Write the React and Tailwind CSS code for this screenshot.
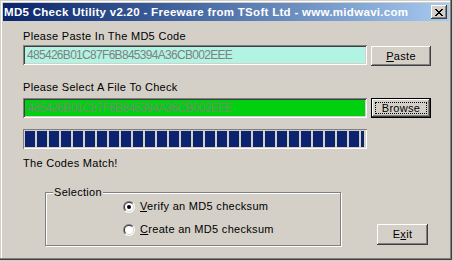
import React from "react";

const raised =
  "shadow-[inset_-1px_-1px_#404040,inset_1px_1px_#ffffff,inset_-2px_-2px_#808080,inset_2px_2px_#d4d0c8]";
const sunken =
  "shadow-[inset_1px_1px_#808080,inset_-1px_-1px_#ffffff,inset_2px_2px_#404040,inset_-2px_-2px_#d4d0c8]";

const Radio = ({ checked }) => (
  <svg width="12" height="12" viewBox="0 0 12 12" className="shrink-0">
    <defs>
      <linearGradient id="rOuter" x1="0" y1="0" x2="1" y2="1">
        <stop offset="0.5" stopColor="#808080" />
        <stop offset="0.5" stopColor="#ffffff" />
      </linearGradient>
      <linearGradient id="rInner" x1="0" y1="0" x2="1" y2="1">
        <stop offset="0.5" stopColor="#404040" />
        <stop offset="0.5" stopColor="#d4d0c8" />
      </linearGradient>
    </defs>
    <circle cx="6" cy="6" r="6" fill="url(#rOuter)" />
    <circle cx="6" cy="6" r="5" fill="url(#rInner)" />
    <circle cx="6" cy="6" r="4" fill="#ffffff" />
    {checked && <circle cx="6" cy="6" r="2" fill="#000000" />}
  </svg>
);

const CloseGlyph = () => (
  <svg width="8" height="7" viewBox="0 0 8 7" shapeRendering="crispEdges">
    <path
      d="M0 0h2v1H0zM6 0h2v1H6zM1 1h2v1H1zM5 1h2v1H5zM2 2h4v1H2zM3 3h2v1H3zM2 4h4v1H2zM1 5h2v1H1zM5 5h2v1H5zM0 6h2v1H0zM6 6h2v1H6z"
      fill="#000"
    />
  </svg>
);

export default function App() {
  const blocks = Array.from({ length: 29 });

  return (
    <div className="w-[453px] h-[261px] bg-[#d4d0c8] font-['Liberation_Sans',Arial,sans-serif] text-[11px] tracking-[0.3px] text-black">
      <div className="w-[452px] h-[260px] p-[3px] shadow-[inset_-1px_-1px_#404040,inset_-2px_-2px_#808080,inset_1px_1px_#d4d0c8,inset_2px_2px_#ffffff]">
        {/* title bar */}
        <div className="h-[18px] flex items-center justify-between bg-gradient-to-r from-[#0a246a] to-[#a6caf0] pl-[1px] pr-[2px]">
          <span className="text-white font-bold text-[11.5px] leading-[18px] tracking-[0.3px] whitespace-nowrap">
            MD5 Check Utility v2.20 - Freeware from TSoft Ltd - www.midwavi.com
          </span>
          <div className={`w-[16px] h-[14px] bg-[#d4d0c8] flex items-center justify-center ${raised}`}>
            <CloseGlyph />
          </div>
        </div>

        {/* content */}
        <div className="pl-[20px]">
          <div className="mt-[9px] leading-[13px]">Please Paste In The MD5 Code</div>
          <div className="mt-[2px] flex items-start gap-[4px]">
            <div className={`w-[344px] h-[20px] bg-[#b2f4e4] pl-[4px] text-[12px] leading-[20px] tracking-[-0.7px] text-[#808080] ${sunken}`}>
              485426B01C87F6B845394A36CB002EEE
            </div>
            <button className={`mt-[1px] w-[60px] h-[20px] bg-[#d4d0c8] text-[11px] leading-[20px] ${raised}`}>
              <u className="underline-offset-[1px]">P</u>aste
            </button>
          </div>

          <div className="mt-[15px] leading-[13px]">Please Select A File To Check</div>
          <div className="mt-[4px] flex items-start gap-[4px]">
            <div className={`w-[344px] h-[20px] bg-[#00d010] pl-[4px] text-[12px] leading-[20px] tracking-[-0.7px] text-[#6f8f6f] ${sunken}`}>
              485426B01C87F6B845394A36CB002EEE
            </div>
            <button className="w-[60px] h-[20px] bg-[#d4d0c8] border border-black p-0">
              <div className="w-full h-full shadow-[inset_-1px_-1px_#404040,inset_1px_1px_#ffffff,inset_-2px_-2px_#808080] p-[3px]">
                <div className="w-full h-full border border-dotted border-black flex items-center justify-center text-[11px] leading-[12px]">
                  Browse
                </div>
              </div>
            </button>
          </div>

          {/* progress */}
          <div className="mt-[11px] w-[344px] h-[20px] p-[2px] pr-[3px] shadow-[inset_1px_1px_#808080,inset_-1px_-1px_#ffffff]">
            <div className="w-full h-full overflow-hidden flex gap-[2px]">
              {blocks.map((_, i) => (
                <div key={i} className="w-[10px] h-full shrink-0 bg-[#0c2470]" />
              ))}
            </div>
          </div>

          <div className="mt-[8px] leading-[13px]">The Codes Match!</div>

          <div className="mt-[22px] flex items-start">
            {/* group box */}
            <div className="relative ml-[22px] w-[296px] h-[54px] border border-[#808080] shadow-[inset_1px_1px_#ffffff,1px_1px_#ffffff]">
              <span className="absolute left-[7px] top-[-7px] bg-[#d4d0c8] px-[1px] leading-[13px]">
                Selection
              </span>
              <div className="pl-[77px] pt-[7px] flex flex-col gap-[10px]">
                <div className="flex items-center gap-[5px] h-[13px] leading-[13px]">
                  <Radio checked />
                  <span>
                    <u className="underline-offset-[1px]">V</u>erify an MD5 checksum
                  </span>
                </div>
                <div className="flex items-center gap-[5px] h-[13px] leading-[13px]">
                  <Radio />
                  <span>
                    <u className="underline-offset-[1px]">C</u>reate an MD5 checksum
                  </span>
                </div>
              </div>
            </div>

            <button className={`mt-[32px] ml-[36px] w-[51px] h-[21px] bg-[#d4d0c8] text-[11px] leading-[21px] ${raised}`}>
              E<u className="underline-offset-[1px]">x</u>it
            </button>
          </div>
        </div>
      </div>
    </div>
  );
}
